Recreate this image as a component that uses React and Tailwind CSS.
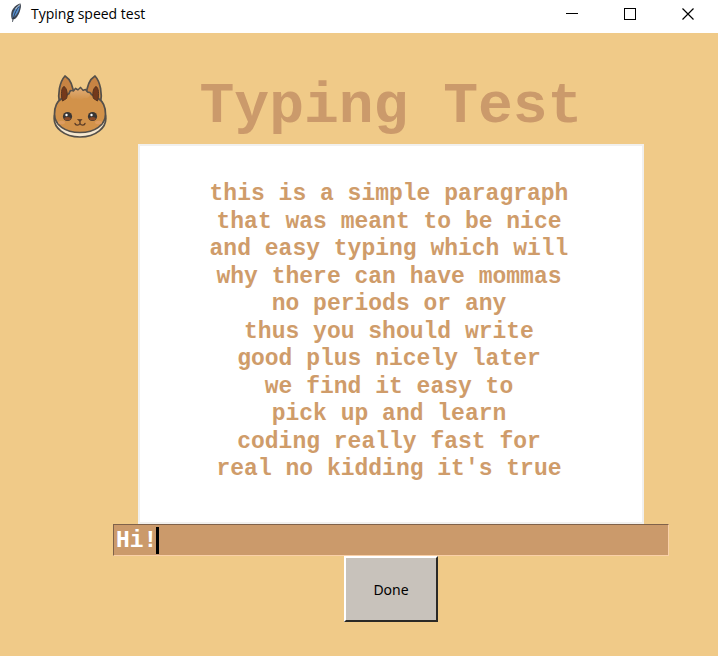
import React, { useState } from "react";

const LINES = [
  "this is a simple paragraph",
  "that was meant to be nice",
  "and easy typing which will",
  "why there can have mommas",
  "no periods or any",
  "thus you should write",
  "good plus nicely later",
  "we find it easy to",
  "pick up and learn",
  "coding really fast for",
  "real no kidding it's true",
];

function Feather() {
  return (
    <svg width="16" height="20" viewBox="0 0 16 20" aria-hidden="true">
      <path d="M12.500 0.500C9 1 5 4.500 3.500 9C2.800 12 3.200 14.500 4 16.500L7 16C10 13.500 11.500 10 12.500 6C13 4 13.200 2 12.500 0.500Z" fill="#3c4450" />
      <path d="M11.800 2C8.500 3.500 5.500 7.500 4.800 11.500L4.600 15C8 13 10.300 9.500 11.200 6Z" fill="#5791d2" />
      <path d="M10.500 4C8 7.500 6 11.500 4.500 18.800" fill="none" stroke="#2b3441" strokeWidth="0.900" />
      <path d="M12.300 1.500C10 3 8.500 4.500 7.500 6.200" fill="none" stroke="#c7c8ca" strokeWidth="1" />
    </svg>
  );
}

function Mascot() {
  return (
    <svg width="56" height="64" viewBox="0 0 56 64" role="img" aria-label="Fox mascot">
      <defs>
        <linearGradient id="forehead" x1="0" y1="0" x2="0" y2="1">
          <stop offset="0" stopColor="#dfac76" />
          <stop offset="1" stopColor="#d2924a" />
        </linearGradient>
      </defs>
      <g stroke="#55504a" strokeWidth="1.700" strokeLinejoin="round" strokeLinecap="round">
        <path d="M2.500 41C0 54 13 63 28 63S56 54 53.500 41Z" fill="#f6e8d0" />
        <path d="M7.500 29C5.500 20 7.500 8 13 2C18 5 21.500 13 22 23Z" fill="#c78343" />
        <path d="M48.500 29C50.500 20 48.500 8 43 2C38 5 34.500 13 34 23Z" fill="#c78343" />
        <path d="M2.500 40C2.500 32 6 27 9 25C13 22 15 21 17 19.500L18.500 16.500L21.500 17L23.500 14.500L26 16L28.500 13.500L31 16.500L33.500 15.500L35.500 18L38 18.500L39.500 20.500C41 21.500 44 23 47 25C50 27 53.500 32 53.500 40C53.500 51 43 58.500 28 58.500S2.500 51 2.500 40Z" fill="#d2924a" />
      </g>
      <path d="M18 20L19 17.500L22 18L23.500 15.500L26 17L28.500 14.500L31 17.500L33 16.500L35 19L38 20C38 24 34 25 32 24C30 27 26 26 24 24.500C21 26 18 24 18 20Z" fill="url(#forehead)" />
      <path d="M10.500 27C8.500 20 9.500 13.500 12 12.500C15 14 16 21 14.500 24.500Z" fill="#74391b" stroke="#553420" />
      <path d="M45.500 27C47.500 20 46.500 13.500 44 12.500C41 14 40 21 41.500 24.500Z" fill="#74391b" stroke="#553420" />
      <ellipse cx="9.500" cy="48.500" rx="3.500" ry="1.800" fill="#dd9c60" />
      <ellipse cx="46.500" cy="48.500" rx="3.500" ry="1.800" fill="#dd9c60" />
      <circle cx="15.500" cy="42.500" r="4.600" fill="#3a3634" />
      <circle cx="40.500" cy="42.500" r="4.600" fill="#3a3634" />
      <ellipse cx="15.500" cy="44.700" rx="3.200" ry="1.700" fill="#8b4a26" />
      <ellipse cx="40.500" cy="44.700" rx="3.200" ry="1.700" fill="#8b4a26" />
      <circle cx="14.500" cy="41" r="1.200" fill="#fff" />
      <circle cx="39.500" cy="41" r="1.200" fill="#fff" />
      <path d="M25.500 45.500H30L28 47.500Z" fill="#5b3c27" stroke="#5b3c27" strokeWidth="0.600" />
      <path d="M28 47V49.500M23 49.500C23.500 51.800 27 51.500 28 49.500C29 51.500 32.500 51.800 33 49.500" fill="none" stroke="#5b3c27" strokeWidth="1.300" strokeLinecap="round" />
    </svg>
  );
}

function WindowButton({ label, children }) {
  return (
    <button type="button" aria-label={label} className="flex h-full w-[58px] items-center justify-center">
      <svg width="12" height="12" viewBox="0 0 12 12" fill="none" stroke="#000" shapeRendering="crispEdges">
        {children}
      </svg>
    </button>
  );
}

function TitleBar() {
  return (
    <header className="flex h-[33px] items-start justify-between bg-white pr-px pl-2">
      <div className="flex items-start gap-[7px] pt-[3px] text-black">
        <Feather />
        <span className="font-['Open_Sans',sans-serif] text-[14px] leading-[22px]">Typing speed test</span>
      </div>
      <div className="flex h-7">
        <WindowButton label="Minimize">
          <path d="M0 5.500H12" />
        </WindowButton>
        <WindowButton label="Maximize">
          <rect x="0.500" y="0.500" width="11" height="11" />
        </WindowButton>
        <WindowButton label="Close">
          <path d="M0.500 0.500L11.500 11.500M11.500 0.500L0.500 11.500" shapeRendering="auto" strokeWidth="1.200" />
        </WindowButton>
      </div>
    </header>
  );
}

export default function App() {
  const [text, setText] = useState("Hi!");
  return (
    <div className="flex min-h-screen flex-col bg-[#f0ca88]">
      <TitleBar />
      <main className="grid grid-cols-[113px_1fr_49px] pt-[41px]">
        <div className="flex justify-end pr-[5px]">
          <Mascot />
        </div>
        <div className="flex flex-col items-center font-['Liberation_Mono',monospace] font-bold">
          <h1 className="h-[70px] text-[58px] leading-[66px] text-[#cb9a6b]">Typing Test</h1>
          <div className="w-full px-[25px]">
            <div className="flex h-[380px] flex-col items-center justify-between border-2 border-[#f1f0ee] bg-white pt-[35px] pr-[4px] pb-[39px] text-[23px] leading-[27px] text-[#cf9c6a]">
              {LINES.map((line) => (
                <p key={line}>{line}</p>
              ))}
            </div>
          </div>
          <div className="relative w-full">
            <input
              aria-label="Type the paragraph"
              value={text}
              onChange={(e) => setText(e.target.value)}
              className="block h-8 w-full border border-t-[#80624a] border-r-[#fad0a8] border-b-[#fad0a8] border-l-[#80624a] bg-[#cb9a6b] px-[2px] pt-[2px] text-[23px] text-white outline-none"
            />
            <span className="absolute top-[3px] left-[43px] h-[27px] w-[3px] bg-black" />
          </div>
          <button
            type="button"
            className="h-[66px] w-[94px] border-2 border-t-white border-r-[#2b2926] border-b-[#2b2926] border-l-white bg-[#c8c2bb] font-['Noto_Sans',sans-serif] text-[14px] font-normal text-black"
          >
            Done
          </button>
        </div>
      </main>
    </div>
  );
}
